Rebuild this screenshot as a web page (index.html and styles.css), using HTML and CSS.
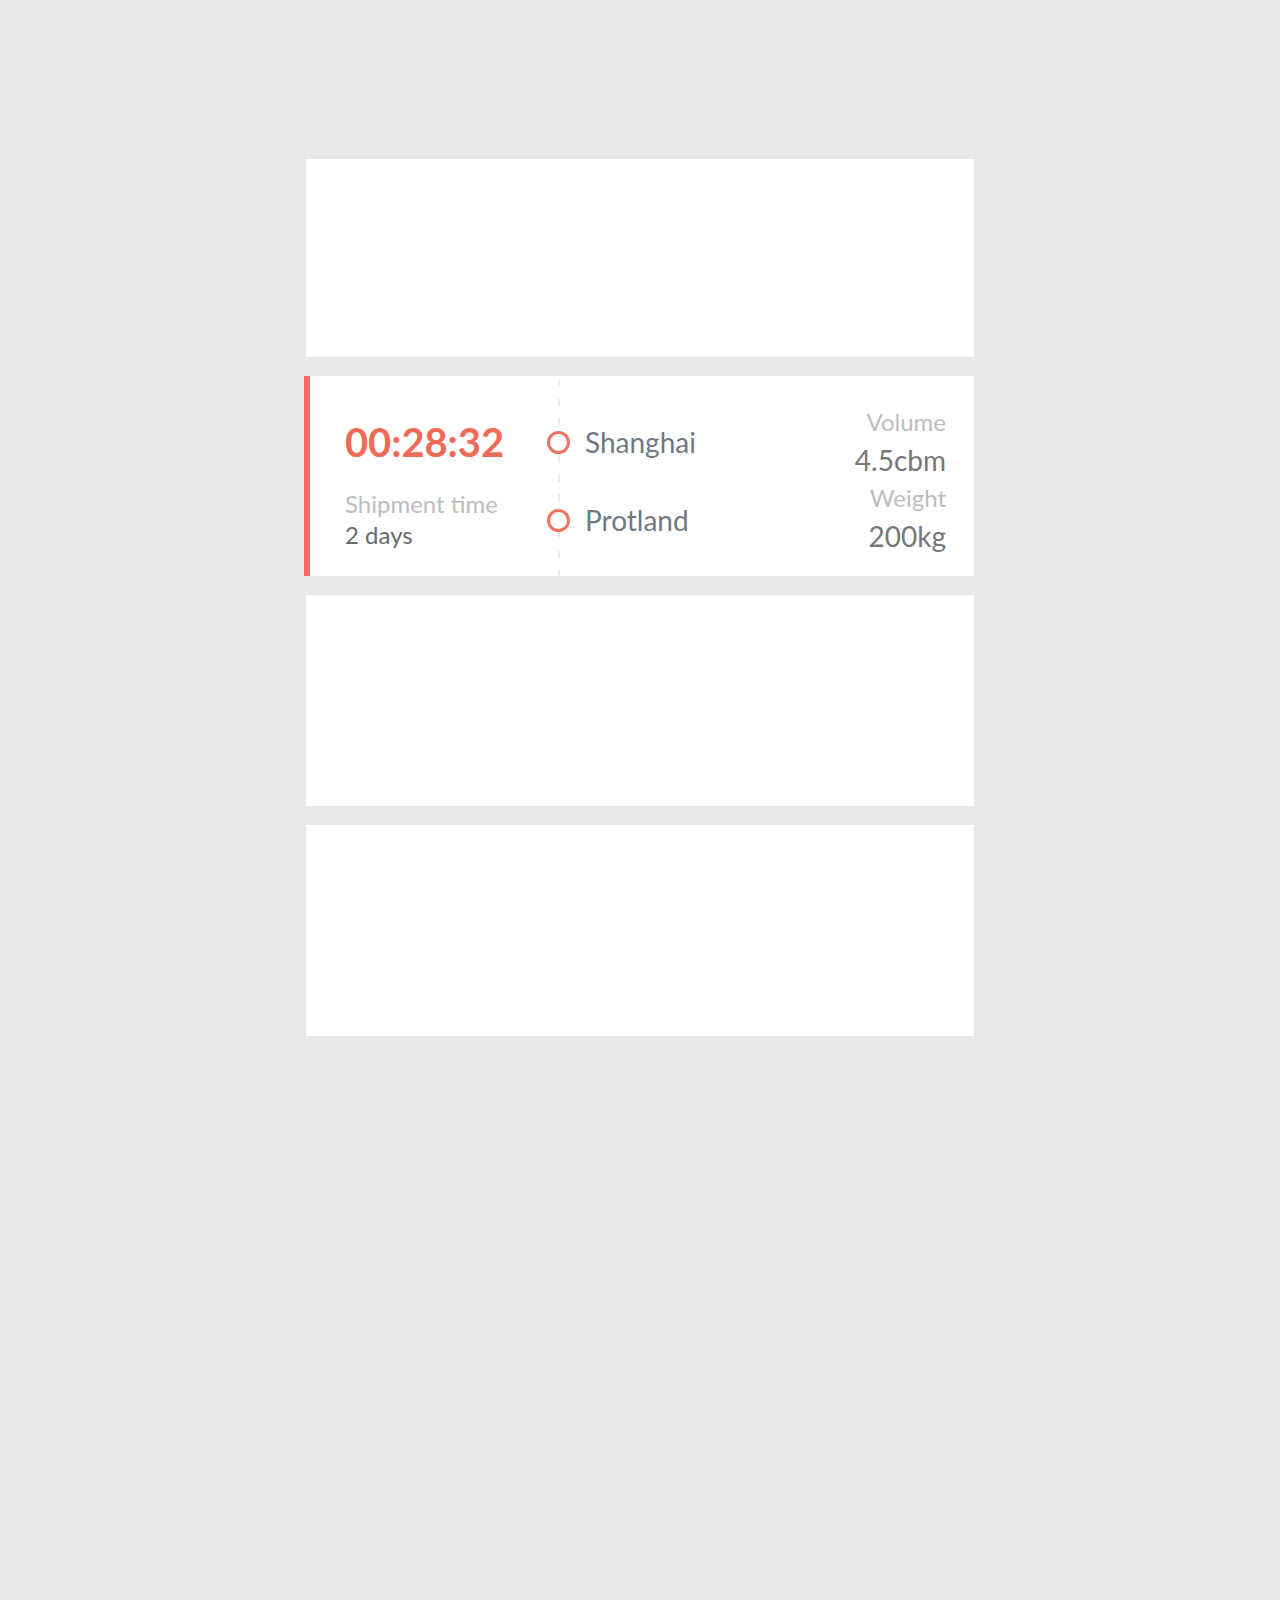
FILE: index.html
```html
<!DOCTYPE html>
<html lang="en">
<head>
<meta charset="utf-8">
<title>Shipments</title>
<link rel="stylesheet" href="styles.css">
</head>
<body>
  <main class="list">
    <section class="card card--short"></section>

    <section class="card card--active">
      <div class="timer-col">
        <div class="timer">00:28:32</div>
        <div class="label label--tight">Shipment time</div>
        <div class="value value--dark">2 days</div>
      </div>

      <div class="route-col">
        <div class="stop">
          <span class="stop__dot"></span>
          <span class="stop__name">Shanghai</span>
        </div>
        <div class="stop">
          <span class="stop__dot"></span>
          <span class="stop__name">Protland</span>
        </div>
      </div>

      <div class="cargo-col">
        <div class="label">Volume</div>
        <div class="value value--big">4.5cbm</div>
        <div class="label">Weight</div>
        <div class="value value--big">200kg</div>
      </div>
    </section>

    <section class="card card--tall"></section>
    <section class="card card--tall"></section>
  </main>
</body>
</html>
```

FILE: styles.css
```css
* {
  box-sizing: border-box;
}

html,
body {
  margin: 0;
  padding: 0;
}

body {
  background: #e8e8e8;
  font-family: Lato, "Liberation Sans", sans-serif;
  min-height: 1600px;
}

.list {
  width: 668px;
  margin: 159px auto 0;
  display: flex;
  flex-direction: column;
  gap: 19px;
}

.card {
  background: #ffffff;
}

.card--short {
  height: 198px;
}

.card--tall {
  height: 211px;
}

/* shipment card currently in progress */
.card--active {
  position: relative;
  height: 200px;
  display: grid;
  grid-template-columns: 252px 1fr auto;
}

.card--active::before {
  content: "";
  position: absolute;
  left: -2px;
  top: 0;
  bottom: 0;
  width: 6px;
  background: #fd6b68;
}

.timer-col {
  padding: 42px 0 0 39px;
}

.timer {
  font-size: 40px;
  font-weight: 700;
  line-height: 48px;
  color: #ef6b57;
  letter-spacing: -0.1px;
  margin-bottom: 25px;
}

.label {
  font-size: 24px;
  line-height: 36px;
  color: #bdbdbd;
}

.label--tight {
  line-height: 26px;
}

.value {
  font-size: 24px;
  line-height: 36px;
  color: #777777;
}

.value--dark {
  color: #6a6a6a;
}

/* dashed route line with the two stops on it */
.route-col {
  display: flex;
  flex-direction: column;
  justify-content: center;
  gap: 44px;
  padding-top: 10px;
  background: linear-gradient(#ebebeb 7px, transparent 7px) 0 4px / 2px 19px repeat-y;
}

.stop {
  height: 34px;
  display: flex;
  align-items: center;
  gap: 15px;
  margin-left: -11px;
}

.stop__dot {
  width: 23px;
  height: 23px;
  border: 3px solid #ef7463;
  border-radius: 50%;
  background: #ffffff;
  flex: none;
}

.stop__name {
  font-size: 28px;
  line-height: 34px;
  color: #6f7982;
}

.cargo-col {
  align-self: center;
  text-align: right;
  padding-top: 6px;
  padding-right: 28px;
}

.cargo-col .label {
  line-height: 38px;
}

.value--big {
  font-size: 28px;
  line-height: 38px;
  color: #777777;
}
```
